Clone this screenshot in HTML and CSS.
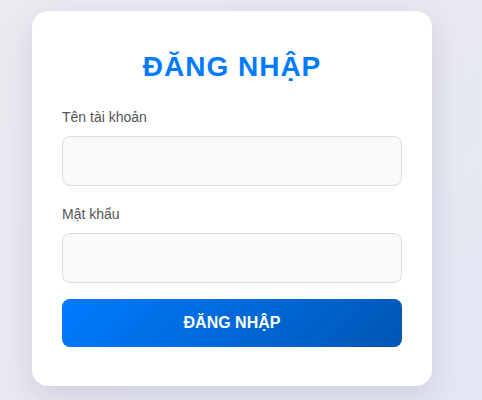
FILE: index.html
```html
<!DOCTYPE html>
<html lang="vi">
<head>
<meta charset="utf-8">
<title>Đăng nhập</title>
<link rel="stylesheet" href="styles.css">
</head>
<body>
<div class="page">
  <form class="card">
    <h2 class="title">ĐĂNG NHẬP</h2>
    <div class="group">
      <label class="label" for="u">Tên tài khoản</label>
      <input class="input" id="u" type="text">
    </div>
    <div class="group">
      <label class="label" for="p">Mật khẩu</label>
      <input class="input" id="p" type="password">
    </div>
    <button class="btn" type="button">ĐĂNG NHẬP</button>
  </form>
</div>
</body>
</html>
```
FILE: styles.css
```css
html, body {
  margin: 0;
  height: 100%;
}
body {
  font-family: "Liberation Sans", Arial, sans-serif;
  background: linear-gradient(135deg, #ece9f0 0%, #e3e7f2 100%);
  overflow: hidden;
}
.page {
  padding: 11px 0 0 32px;
}
.card {
  box-sizing: border-box;
  width: 400px;
  background: #fff;
  border-radius: 16px;
  padding: 40px 30px 39px;
  box-shadow: 0 10px 30px rgba(40, 40, 90, 0.12);
}
.title {
  margin: 0 0 26px;
  text-align: center;
  color: #007bff;
  font-size: 28px;
  font-weight: bold;
  letter-spacing: 1px;
  line-height: 32px;
}
.group {
  margin-bottom: 20px;
}
.group:last-of-type {
  margin-bottom: 16px;
}
.label {
  display: block;
  font-size: 14px;
  line-height: 16px;
  color: #555;
  margin-bottom: 11px;
}
.input {
  display: block;
  box-sizing: border-box;
  width: 100%;
  height: 50px;
  border: 1px solid #ddd;
  border-radius: 8px;
  background: #f8f9fa;
  padding: 0 14px;
  font-size: 15px;
  outline: none;
}
.btn {
  display: block;
  width: 100%;
  height: 48px;
  border: none;
  border-radius: 8px;
  background: linear-gradient(135deg, #007bff 0%, #0056b3 100%);
  color: #fff;
  font-family: "Liberation Sans", Arial, sans-serif;
  font-size: 16px;
  font-weight: bold;
  cursor: pointer;
}
```
